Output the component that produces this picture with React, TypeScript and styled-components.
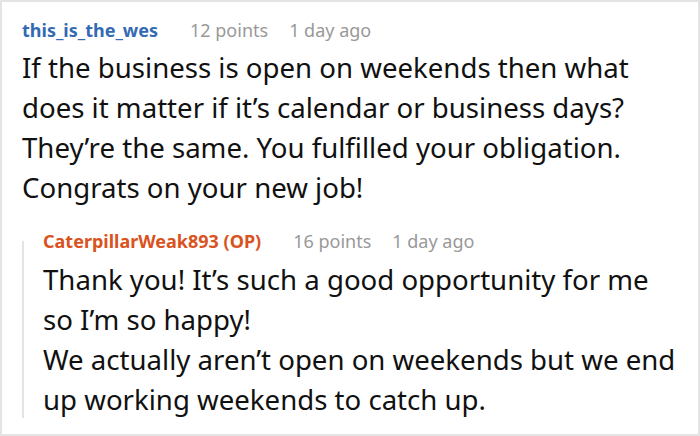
import React from "react";
import styled, { createGlobalStyle } from "styled-components";

const Global = createGlobalStyle`
  html, body { margin: 0; padding: 0; background: #fff; }
  body { font-family: "Noto Sans", "Open Sans", sans-serif; }
`;

const Frame = styled.div`
  box-sizing: border-box;
  width: 700px;
  height: 436px;
  border: 2px solid #e4e4e4;
  padding: 13px 20px 0 20px;
  overflow: hidden;
  background: #fff;
`;

const Meta = styled.div`
  display: flex;
  align-items: baseline;
  gap: 21px;
  font-size: 18px;
  line-height: 30px;
`;

const Author = styled.span<{ $op?: boolean }>`
  font-weight: 700;
  color: ${(p) => (p.$op ? "#d9531e" : "#336ab3")};
  margin-right: 11px;
`;

const Info = styled.span`
  color: #999;
`;

const Body = styled.div<{ $top: number }>`
  font-size: 27.6px;
  line-height: 40px;
  color: #111;
  margin-top: ${(p) => p.$top}px;
`;

const Reply = styled.div`
  display: flex;
  gap: 19px;
  margin-top: 19px;
`;

const Rail = styled.div`
  width: 2px;
  flex-shrink: 0;
  background: #e4e4e4;
  margin: 15px 0 1px;
`;

const ReplyContent = styled.div`
  flex: 1;
  min-width: 0;
`;

export default function App() {
  return (
    <>
      <Global />
      <Frame>
        <Meta>
          <Author>this_is_the_wes</Author>
          <Info>12 points</Info>
          <Info>1 day ago</Info>
        </Meta>
        <Body $top={2}>
          If the business is open on weekends then what does it matter if it’s calendar or business days? They’re the same. You fulfilled your obligation. Congrats on your new job!
        </Body>
        <Reply>
          <Rail />
          <ReplyContent>
            <Meta>
              <Author $op>CaterpillarWeak893 (OP)</Author>
              <Info>16 points</Info>
              <Info>1 day ago</Info>
            </Meta>
            <Body $top={3}>
              Thank you! It’s such a good opportunity for me so I’m so happy!
              <br />
              We actually aren’t open on weekends but we end up working weekends to catch up.
            </Body>
          </ReplyContent>
        </Reply>
      </Frame>
    </>
  );
}
